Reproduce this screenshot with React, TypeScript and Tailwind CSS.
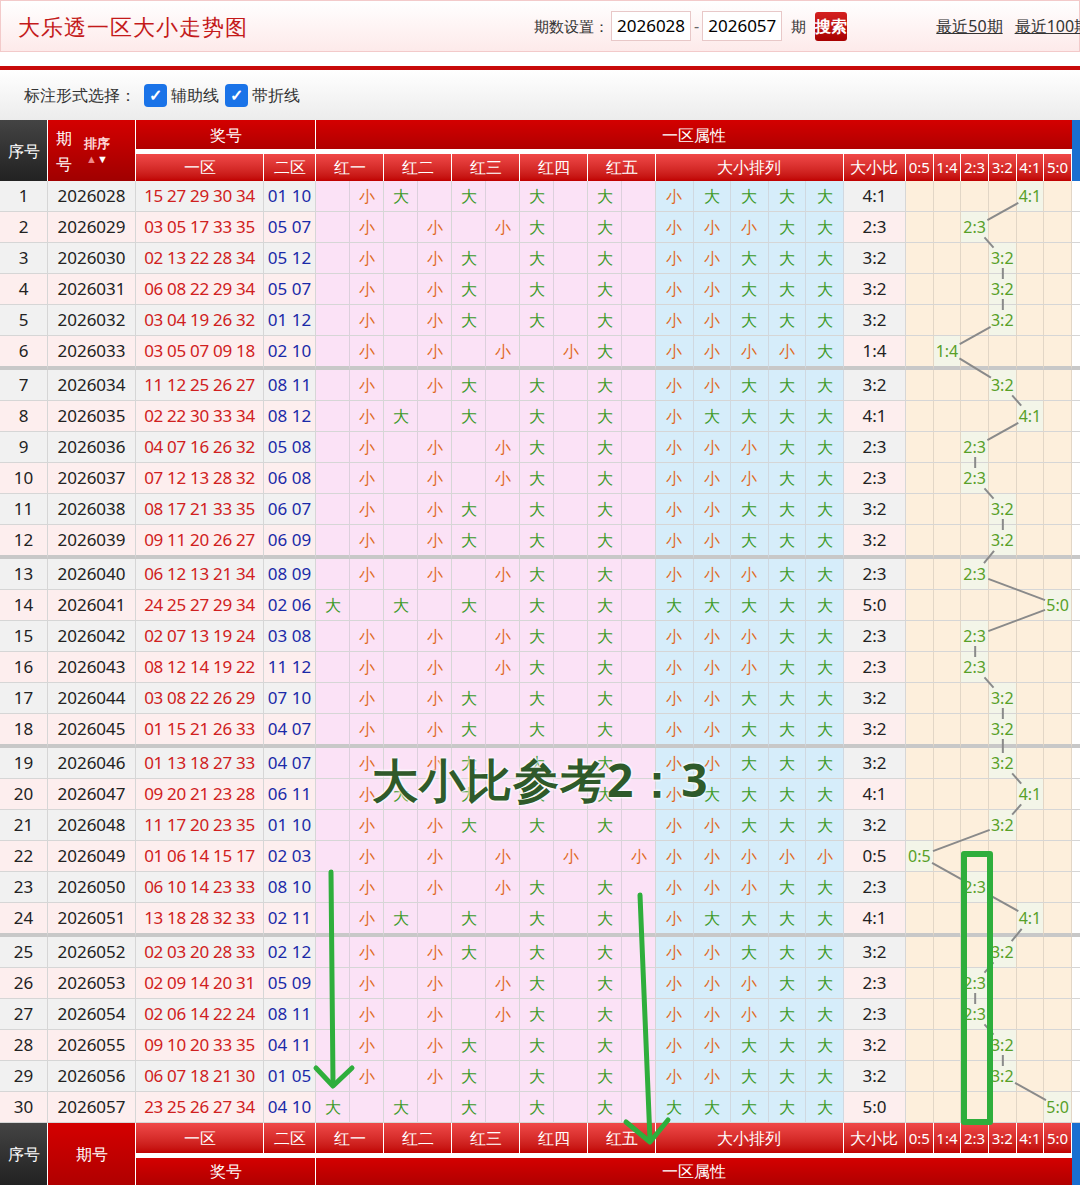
import React from "react";

const rows: [string, string, string][] = [
  ["2026028", "15 27 29 30 34", "01 10"],
  ["2026029", "03 05 17 33 35", "05 07"],
  ["2026030", "02 13 22 28 34", "05 12"],
  ["2026031", "06 08 22 29 34", "05 07"],
  ["2026032", "03 04 19 26 32", "01 12"],
  ["2026033", "03 05 07 09 18", "02 10"],
  ["2026034", "11 12 25 26 27", "08 11"],
  ["2026035", "02 22 30 33 34", "08 12"],
  ["2026036", "04 07 16 26 32", "05 08"],
  ["2026037", "07 12 13 28 32", "06 08"],
  ["2026038", "08 17 21 33 35", "06 07"],
  ["2026039", "09 11 20 26 27", "06 09"],
  ["2026040", "06 12 13 21 34", "08 09"],
  ["2026041", "24 25 27 29 34", "02 06"],
  ["2026042", "02 07 13 19 24", "03 08"],
  ["2026043", "08 12 14 19 22", "11 12"],
  ["2026044", "03 08 22 26 29", "07 10"],
  ["2026045", "01 15 21 26 33", "04 07"],
  ["2026046", "01 13 18 27 33", "04 07"],
  ["2026047", "09 20 21 23 28", "06 11"],
  ["2026048", "11 17 20 23 35", "01 10"],
  ["2026049", "01 06 14 15 17", "02 03"],
  ["2026050", "06 10 14 23 33", "08 10"],
  ["2026051", "13 18 28 32 33", "02 11"],
  ["2026052", "02 03 20 28 33", "02 12"],
  ["2026053", "02 09 14 20 31", "05 09"],
  ["2026054", "02 06 14 22 24", "08 11"],
  ["2026055", "09 10 20 33 35", "04 11"],
  ["2026056", "06 07 18 21 30", "01 05"],
  ["2026057", "23 25 26 27 34", "04 10"],
];

const ratios = ["0:5", "1:4", "2:3", "3:2", "4:1", "5:0"];
const GRID =
  "grid grid-cols-[48px_88px_128px_52px_repeat(10,34px)_repeat(5,37.6px)_62px_repeat(6,27.67px)_8px]";
const cjk = "font-['Noto_Sans_CJK_SC',sans-serif]";
const num = "font-['Roboto','Noto_Sans_CJK_SC',sans-serif]";

const Big = () => <span className="text-[#3c9a28]">大</span>;
const Small = () => <span className="text-[#e06a1e]">小</span>;

const rowTop = (i: number) => i * 31 + Math.floor(i / 6) * 3;

export default function App() {
  const data = rows.map(([qh, red, blue]) => {
    const nums = red.split(" ").map(Number);
    const big = nums.map((n) => n >= 18);
    const nb = big.filter(Boolean).length;
    return { qh, red, blue, big, nb };
  });

  const pts = data.map((d, i) => ({
    x: 906 + 27.67 * (d.nb + 0.5),
    y: rowTop(i) + 15,
  }));

  return (
    <div className={`w-[1080px] h-[1202px] bg-white relative overflow-hidden ${cjk}`}>
      {/* top bar */}
      <div className="h-[52px] flex items-center bg-gradient-to-b from-white to-[#fdeaea] border border-[#f3caca] pl-[17px] whitespace-nowrap">
        <div className="text-[22px] text-[#c41a1a] tracking-[1px] w-[516px] shrink-0">大乐透一区大小走势图</div>
        <span className="text-[15px] text-[#333]">期数设置：</span>
        <div className={`ml-[2px] w-[82px] h-[30px] border border-[#e8c8c8] bg-white text-[17px] flex items-center px-[5px] ${num}`}>2026028</div>
        <span className="mx-[3px] text-[#666]">-</span>
        <div className={`w-[82px] h-[30px] border border-[#e8c8c8] bg-white text-[17px] flex items-center px-[5px] ${num}`}>2026057</div>
        <span className="ml-[9px] text-[15px] text-[#333]">期</span>
        <div className="ml-[9px] w-[58px] h-[29px] rounded-[3px] bg-gradient-to-b from-[#d42020] to-[#a80000] text-white text-[16px] font-bold flex items-center justify-center">搜索</div>
        <span className="ml-[89px] text-[16px] text-[#333] underline">最近50期</span>
        <span className="ml-[12px] text-[16px] text-[#333] underline">最近100期</span>
      </div>
      <div className="h-[14px]" />
      <div className="h-[4px] bg-[#c80a0a]" />
      <div className="h-[50px] bg-gradient-to-b from-white to-[#ececec] flex items-center pl-[24px] text-[16px] text-[#333] gap-[4px]">
        <span className="mr-[4px]">标注形式选择：</span>
        <span className="w-[23px] h-[23px] rounded-[4px] bg-[#1a73e8] text-white text-[16px] flex items-center justify-center font-bold">✓</span>
        <span>辅助线</span>
        <span className="ml-[2px] w-[23px] h-[23px] rounded-[4px] bg-[#1a73e8] text-white text-[16px] flex items-center justify-center font-bold">✓</span>
        <span>带折线</span>
      </div>

      {/* header */}
      <div className={`${GRID} text-white text-[16px] h-[61px]`}>
        <div className="row-span-2 bg-gradient-to-b from-[#444] to-[#222] flex items-center justify-center border-r border-white">序号</div>
        <div className="row-span-2 bg-gradient-to-b from-[#d40000] to-[#a00000] flex items-center border-r border-white pl-[8px] gap-[12px]">
          <div className="flex flex-col leading-[26px]"><span>期</span><span>号</span></div>
          <div className="flex flex-col items-center leading-[16px]">
            <span className="text-[13px] font-bold text-[#ffd8d8]">排序</span>
            <span className="text-[11px]"><span className="text-[#e88]">▲</span>▼</span>
          </div>
        </div>
        <div className="col-span-2 bg-gradient-to-b from-[#d40000] to-[#b00000] flex items-center justify-center border-r border-b border-white h-[30px]">奖号</div>
        <div className="col-[5/27] bg-gradient-to-b from-[#d40000] to-[#b00000] flex items-center justify-center h-[30px] border-b border-white">一区属性</div>
        <div className="row-span-2 bg-[#1a6fd0]" />
        {["一区", "二区"].map((t) => (
          <div key={t} className="bg-gradient-to-b from-[#f04848] to-[#c00000] flex items-center justify-center border-r border-white">{t}</div>
        ))}
        {["红一", "红二", "红三", "红四", "红五"].map((t) => (
          <div key={t} className="col-span-2 bg-gradient-to-b from-[#f04848] to-[#c00000] flex items-center justify-center border-r border-white">{t}</div>
        ))}
        <div className="col-span-5 bg-gradient-to-b from-[#f04848] to-[#c00000] flex items-center justify-center border-r border-white">大小排列</div>
        <div className="bg-gradient-to-b from-[#f04848] to-[#c00000] flex items-center justify-center border-r border-white">大小比</div>
        {ratios.map((t) => (
          <div key={t} className={`bg-gradient-to-b from-[#f04848] to-[#c00000] flex items-center justify-center border-r border-white text-[15px] ${num}`}>{t}</div>
        ))}
      </div>

      {/* body */}
      <div className="relative">
        {data.map((d, i) => {
          const alt = i % 2 === 0 ? "bg-[#f1f1f1]" : "bg-[#fdeeee]";
          const end = i % 6 === 5 && i !== 29;
          const bb = end ? "border-b-4 border-b-[#c8c8c8]" : "border-b border-b-[#d6d6d6]";
          const sorted = [...d.big].sort((a, b) => Number(a) - Number(b));
          return (
            <div key={d.qh} className={`${GRID} ${end ? "h-[34px]" : "h-[31px]"} text-[17px] ${num}`}>
              <div className={`${alt} ${bb} border-r border-r-[#d6d6d6] flex items-center justify-center text-[#222]`}>{i + 1}</div>
              <div className={`${alt} ${bb} border-r border-r-[#d6d6d6] flex items-center justify-center text-[#222]`}>{d.qh}</div>
              <div className={`${alt} ${bb} border-r border-r-[#d6d6d6] flex items-center justify-center text-[#d02020] tracking-[-0.3px]`}>{d.red}</div>
              <div className={`${alt} ${bb} border-r border-r-[#d6d6d6] flex items-center justify-center text-[#1a2aa8]`}>{d.blue}</div>
              {d.big.map((b, k) => (
                <React.Fragment key={k}>
                  <div className={`bg-[#fbe2f6] ${bb} border-r border-r-[#dcd0dc] flex items-center justify-center text-[16px] ${cjk}`}>{b ? <Big /> : null}</div>
                  <div className={`bg-[#fbe2f6] ${bb} border-r border-r-[#d6d6d6] flex items-center justify-center text-[16px] ${cjk}`}>{b ? null : <Small />}</div>
                </React.Fragment>
              ))}
              {sorted.map((b, k) => (
                <div key={k} className={`bg-[#d6edfa] ${bb} border-r border-r-[#d0d8e0] flex items-center justify-center text-[16px] ${cjk}`}>{b ? <Big /> : <Small />}</div>
              ))}
              <div className={`${alt} ${bb} border-r border-r-[#d6d6d6] flex items-center justify-center text-[#222]`}>{d.nb}:{5 - d.nb}</div>
              {ratios.map((r, k) => (
                <div key={r} className={`${k === d.nb ? "bg-[#f3f5e8]" : "bg-[#fdefdc]"} ${bb} border-r border-r-[#e2d6c6] flex items-center justify-center text-[16px] text-[#58a028]`}>{k === d.nb ? r : ""}</div>
              ))}
              <div className={`bg-white ${bb}`} />
            </div>
          );
        })}
        <svg className="absolute left-0 top-0 pointer-events-none" width="1080" height="945">
          {pts.slice(1).map((p, i) => {
            const a = pts[i];
            const dx = p.x - a.x, dy = p.y - a.y;
            const len = Math.hypot(dx, dy);
            const s = dx === 0 ? 10 : 14;
            return (
              <line key={i} x1={a.x + (dx / len) * s} y1={a.y + (dy / len) * s} x2={p.x - (dx / len) * s} y2={p.y - (dy / len) * s} stroke="#8a8a8a" strokeWidth="2" />
            );
          })}
        </svg>
      </div>

      {/* footer header */}
      <div className={`${GRID} text-white text-[16px] h-[62px]`}>
        <div className="row-span-2 bg-gradient-to-b from-[#444] to-[#222] flex items-center justify-center border-r border-white">序号</div>
        <div className="row-span-2 bg-gradient-to-b from-[#d40000] to-[#b00000] flex items-center justify-center border-r border-white">期号</div>
        {["一区", "二区"].map((t) => (
          <div key={t} className="bg-gradient-to-b from-[#f04848] to-[#c00000] flex items-center justify-center border-r border-b border-white h-[31px]">{t}</div>
        ))}
        {["红一", "红二", "红三", "红四", "红五"].map((t) => (
          <div key={t} className="col-span-2 bg-gradient-to-b from-[#f04848] to-[#c00000] flex items-center justify-center border-r border-b border-white h-[31px]">{t}</div>
        ))}
        <div className="col-span-5 bg-gradient-to-b from-[#f04848] to-[#c00000] flex items-center justify-center border-r border-b border-white h-[31px]">大小排列</div>
        <div className="bg-gradient-to-b from-[#f04848] to-[#c00000] flex items-center justify-center border-r border-b border-white h-[31px]">大小比</div>
        {ratios.map((t) => (
          <div key={t} className={`bg-gradient-to-b from-[#f04848] to-[#c00000] flex items-center justify-center border-r border-b border-white h-[31px] text-[15px] ${num}`}>{t}</div>
        ))}
        <div className="row-span-2 bg-[#1a6fd0]" />
        <div className="col-span-2 bg-gradient-to-b from-[#d40000] to-[#b00000] flex items-center justify-center border-r border-white">奖号</div>
        <div className="col-[5/27] bg-gradient-to-b from-[#d40000] to-[#b00000] flex items-center justify-center">一区属性</div>
      </div>

      {/* annotations */}
      <div className="absolute left-[372px] top-[745px] text-[46px] font-bold text-[#2f5a2a] tracking-[1px] [text-shadow:0_0_3px_#fff,0_0_3px_#fff,0_0_3px_#fff] whitespace-nowrap">大小比参考2：3</div>
      <svg className="absolute left-0 top-0 pointer-events-none" width="1080" height="1202">
        <g stroke="#2fae3c" strokeWidth="5" fill="none" strokeLinecap="round" strokeLinejoin="round">
          <path d="M331 872 L333 1084" />
          <path d="M316 1068 L333 1086 L352 1068" />
          <path d="M640 895 L650 1140" />
          <path d="M626 1122 L650 1142 L668 1120" />
          <rect x="964" y="854" width="26" height="268" strokeWidth="6" />
        </g>
      </svg>
    </div>
  );
}
